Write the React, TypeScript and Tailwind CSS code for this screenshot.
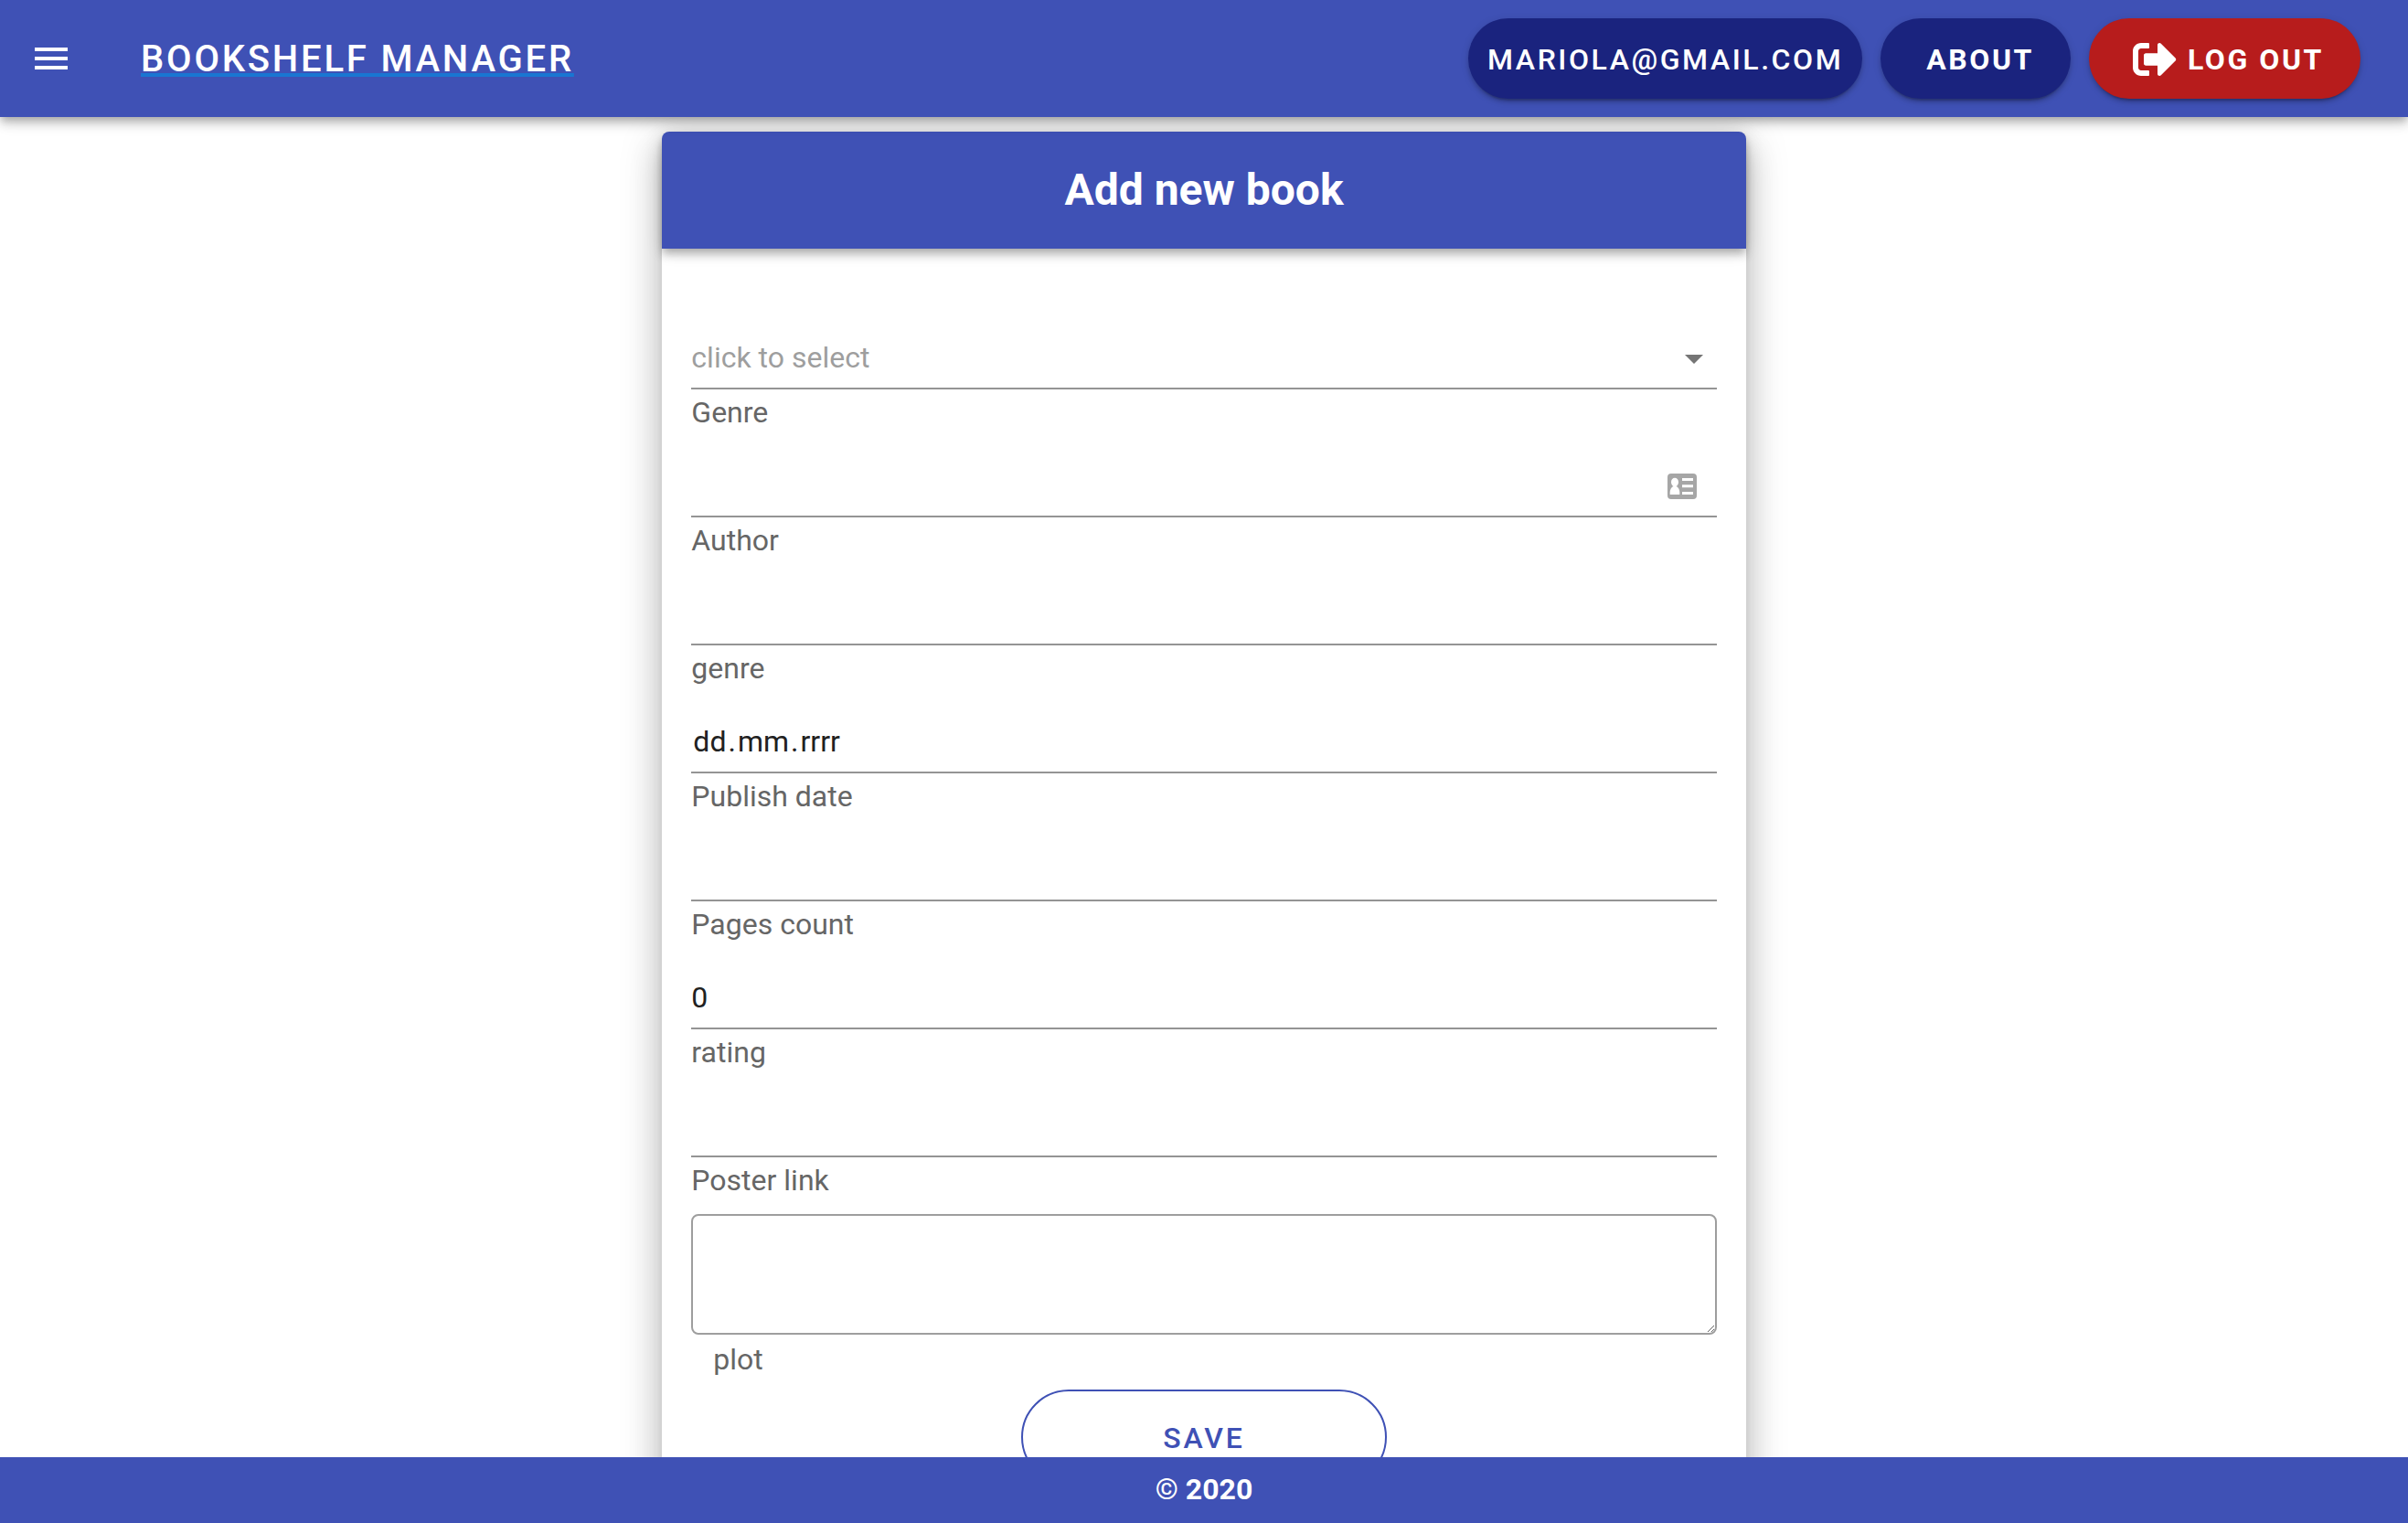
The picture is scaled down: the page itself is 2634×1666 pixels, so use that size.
import { FaSignOutAlt } from "react-icons/fa";
import { MdMenu } from "react-icons/md";
import type { ReactNode } from "react";

const navButton =
  "flex h-22 items-center rounded-full pt-0.5 text-[32px] leading-10 tracking-[0.08em] text-white uppercase shadow-[0_6px_2px_-4px_rgba(0,0,0,0.2),0_4px_4px_0_rgba(0,0,0,0.14),0_2px_10px_0_rgba(0,0,0,0.12)]";
const barShadow =
  "shadow-[0_4px_8px_-2px_rgba(0,0,0,0.2),0_8px_10px_0_rgba(0,0,0,0.14),0_2px_20px_0_rgba(0,0,0,0.12)]";
const cardShadow =
  "shadow-[0_14px_16px_-8px_rgba(0,0,0,0.2),0_24px_34px_4px_rgba(0,0,0,0.14),0_10px_44px_8px_rgba(0,0,0,0.12)]";
const control =
  "block h-[68px] w-full appearance-none border-b-2 border-[#949494] bg-transparent text-[32px] outline-none";
const helper = "block h-7 text-[32px] leading-[22px] text-[#666666]";

function Field({ id, label, children }: { id: string; label: string; children: ReactNode }) {
  return (
    <div className="flex flex-col gap-3.5">
      <div className="relative">{children}</div>
      <label htmlFor={id} className={helper}>
        {label}
      </label>
    </div>
  );
}

function DateInput({ id }: { id: string }) {
  const part = "field-sizing-content bg-transparent px-0.5 outline-none";
  return (
    <div role="group" className="flex h-[68px] items-center border-b-2 border-[#949494]">
      <input id={id} type="text" aria-label="Day" defaultValue="dd" className={part} />
      <span>.</span>
      <input type="text" aria-label="Month" defaultValue="mm" className={part} />
      <span>.</span>
      <input type="text" aria-label="Year" defaultValue="rrrr" className={part} />
    </div>
  );
}

function ContactCardIcon() {
  return (
    <svg viewBox="0 0 32 28" className="absolute right-[22px] bottom-5 h-7 w-8" aria-hidden="true">
      <rect width="32" height="28" rx="4" fill="#a6a6a6" />
      <ellipse cx="8" cy="9.5" rx="4" ry="4.8" fill="#fff" />
      <path d="M2.700 23v-2c0-3.800 1.800-6.500 4-7h2.600c2.200.5 4 3.200 4 7v2z" fill="#fff" />
      <path d="M16 5h12v3H16zM16 12.300h12v3H16zM16 20h12v3H16z" fill="#fff" />
    </svg>
  );
}

export default function App() {
  return (
    <div className="flex h-screen flex-col overflow-hidden bg-white font-['Roboto',sans-serif] text-[32px] text-[#212121]">
      <header className={`relative z-10 flex h-32 shrink-0 items-center bg-[#3f51b5] pr-[52px] pl-2 ${barShadow}`}>
        <button type="button" aria-label="Menu" className="p-6 text-white">
          <MdMenu className="size-12" />
        </button>
        <a
          href="#home"
          className="ml-[50px] pt-0.5 text-[40px] leading-16 font-medium tracking-[0.07em] text-white uppercase underline decoration-[#1976d2] decoration-4"
        >
          Bookshelf Manager
        </a>
        <nav className="ml-auto flex items-center gap-5">
          <button type="button" className={`${navButton} bg-[#1a237e] px-[21px] font-medium`}>
            mariola@gmail.com
          </button>
          <button type="button" className={`${navButton} bg-[#1a237e] pr-10 pl-[50px] font-bold`}>
            About
          </button>
          <button type="button" className={`${navButton} gap-3 bg-[#b71c1c] pr-10 pl-12 font-bold`}>
            <FaSignOutAlt className="size-12" />
            Log out
          </button>
        </nav>
      </header>

      <main className="min-h-0 grow overflow-hidden pt-4">
        <section className={`mx-auto w-[45%] rounded-lg bg-white pb-24 ${cardShadow}`}>
          <div className={`flex h-32 items-center justify-center rounded-t-lg bg-[#3f51b5] ${barShadow}`}>
            <h1 className="text-[48px] leading-16 font-bold text-white">Add new book</h1>
          </div>
          <form className="px-8 pt-[86px]">
            <div className="flex flex-col gap-[30px]">
              <Field id="category" label="Genre">
                <select id="category" defaultValue="" className={`${control} text-[#9e9e9e]`}>
                  <option value="">click to select</option>
                </select>
                <svg viewBox="0 0 20 10" className="pointer-events-none absolute right-[15px] bottom-7 h-2.5 w-5" aria-hidden="true">
                  <path d="M0 0h20L10 10z" fill="#757575" />
                </svg>
              </Field>
              <Field id="author" label="Author">
                <input id="author" type="text" className={control} />
                <ContactCardIcon />
              </Field>
              <Field id="genre" label="genre">
                <input id="genre" type="text" className={control} />
              </Field>
              <Field id="date" label="Publish date">
                <DateInput id="date" />
              </Field>
              <Field id="pages" label="Pages count">
                <input id="pages" type="text" inputMode="numeric" className={control} />
              </Field>
              <Field id="rating" label="rating">
                <input id="rating" type="text" inputMode="numeric" defaultValue="0" className={control} />
              </Field>
              <Field id="poster" label="Poster link">
                <input id="poster" type="url" className={control} />
              </Field>
            </div>
            <textarea
              id="plot"
              className="mt-5 block h-[132px] w-full resize rounded-lg border-2 border-[#9e9e9e] bg-transparent px-6 py-4 outline-none"
            />
            <label htmlFor="plot" className={`${helper} mt-4 pl-6`}>
              plot
            </label>
            <button
              type="submit"
              className="mx-auto mt-4 block h-[104px] w-[400px] rounded-full border-2 border-[#3f51b5] pt-0.5 text-[32px] font-medium tracking-[0.09em] text-[#3f51b5] uppercase"
            >
              Save
            </button>
          </form>
        </section>
      </main>

      <footer className="relative z-10 flex h-18 shrink-0 items-center justify-center bg-[#3f51b5] pb-0.5 font-bold text-white">
        © 2020
      </footer>
    </div>
  );
}
